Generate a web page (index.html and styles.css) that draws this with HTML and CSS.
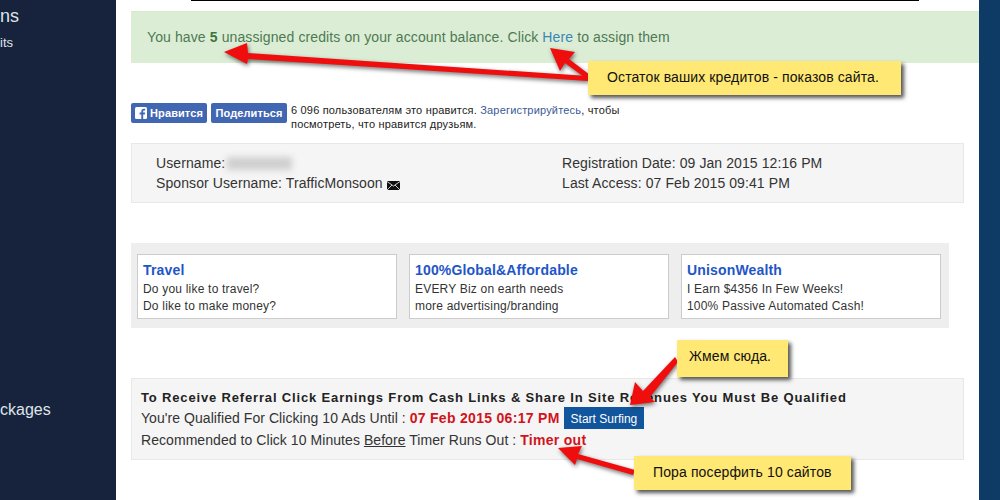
FILE: index.html
```html
<!DOCTYPE html>
<html lang="en">

<head>
    <meta charset="UTF-8">
    <meta name="viewport" content="width=device-width, initial-scale=1.0">
    <title>Member Area</title>
    <link rel="stylesheet" href="styles.css">
</head>

<body>
    <div class="page">
        <div class="sidebar">
            <div class="menu-main">ns</div>
            <div class="menu-sub">its</div>
            <div class="menu-packages">ckages</div>
        </div>

        <div class="content">
            <div class="top-line"></div>

            <div class="alert">You have <b>5</b> unassigned credits on your account balance. Click <a href="#">Here</a> to assign them</div>

            <div class="social">
                <div class="fb-btn">
                    <svg class="fb-icon" viewBox="0 0 12 12">
                        <rect width="12" height="12" rx="1.5" fill="#fff" />
                        <path d="M8.2 12V7.5h1.6l.3-1.9H8.2V4.5c0-.6.2-.9 1-.9h1V1.9C9.9 1.9 9.400 1.800 8.800 1.800 7.300 1.800 6.300 2.700 6.300 4.300v1.300H4.600v1.900h1.700V12z" fill="#4267b2" />
                    </svg>
                    Нравится
                </div>
                <div class="fb-btn">Поделиться</div>
                <div class="fb-text">
                    <div>6 096 пользователям это нравится. <a href="#">Зарегистрируйтесь</a>, чтобы</div>
                    <div>посмотреть, что нравится друзьям.</div>
                </div>
            </div>

            <div class="info-box">
                <div class="info-col">
                    <div>Username: <span class="blurred"></span></div>
                    <div>Sponsor Username: TrafficMonsoon
                        <svg class="mail" viewBox="0 0 13 9">
                            <rect width="13" height="9" fill="#111" />
                            <path d="M0 .5 6.500 5 13 .5M0 9l5-5M13 9 8 4" fill="none" stroke="#fff" stroke-width=".8" />
                        </svg>
                    </div>
                </div>
                <div class="info-col">
                    <div>Registration Date: 09 Jan 2015 12:16 PM</div>
                    <div>Last Access: 07 Feb 2015 09:41 PM</div>
                </div>
            </div>

            <div class="ads">
                <div class="ad">
                    <a href="#">Travel</a>
                    <div>Do you like to travel?</div>
                    <div>Do like to make money?</div>
                </div>
                <div class="ad">
                    <a href="#">100%Global&amp;Affordable</a>
                    <div>EVERY Biz on earth needs</div>
                    <div>more advertising/branding</div>
                </div>
                <div class="ad">
                    <a href="#">UnisonWealth</a>
                    <div>I Earn $4356 In Few Weeks!</div>
                    <div>100% Passive Automated Cash!</div>
                </div>
            </div>

            <div class="qualify">
                <h4>To Receive Referral Click Earnings From Cash Links &amp; Share In Site Revenues You Must Be Qualified</h4>
                <div class="qualify-row">You're Qualified For Clicking 10 Ads Until : <b class="red">07 Feb 2015 06:17 PM</b> <a class="surf" href="#">Start Surfing</a></div>
                <div class="qualify-row">Recommended to Click 10 Minutes <u>Before</u> Timer Runs Out : <b class="red">Timer out</b></div>
            </div>
        </div>

        <div class="right-bar"></div>

        <!-- annotations drawn over the screenshot -->
        <svg class="arrows" viewBox="0 0 1000 500">
            <path d="M224 52 247 43 248 53 588 76 588 81 248 59 247 64Z" />
            <path d="M550 48 575 52 569 59 590 75 588 80 565 63 560 71Z" />
            <path d="M630 405 635 382 643 391 675 357 678 362 650 397 655 402Z" />
            <path d="M558 448 582 446 578 454 635 470 633 475 577 459 575 465Z" />
        </svg>
        <div class="note note-credits">Остаток ваших кредитов - показов сайта.</div>
        <div class="note note-click">Жмем сюда.</div>
        <div class="note note-surf">Пора посерфить 10 сайтов</div>
    </div>
</body>

</html>
```

FILE: styles.css
```css
body {
    margin: 0;
    font-family: "Liberation Sans", Arial, sans-serif;
    background: #fff;
}

.page {
    position: relative;
    display: flex;
    width: 1000px;
    height: 500px;
    overflow: hidden;
}

.sidebar {
    width: 116px;
    flex-shrink: 0;
    background: #17233c;
    color: #dfe3ea;
    padding-top: 6px;
}

.menu-main {
    font-size: 18px;
    line-height: 21px;
}

.menu-sub {
    font-size: 13px;
    line-height: 15px;
    margin-top: 8px;
}

.menu-packages {
    font-size: 16px;
    line-height: 18px;
    margin-top: 351px;
}

.content {
    width: 863px;
    flex-shrink: 0;
    box-sizing: border-box;
    padding-left: 15px;
    color: #333;
    font-size: 14px;
}

.right-bar {
    flex: 1;
    background: #0e3a66;
}

.top-line {
    width: 728px;
    height: 1px;
    margin-left: 60px;
    background: #000;
}

.alert {
    height: 52px;
    margin-top: 10px;
    box-sizing: border-box;
    padding: 16px 16px 0;
    background: #dcedd6;
    border-top: 1px solid #d6e9c6;
    color: #4d7a52;
    font-size: 14px;
    line-height: 18px;
    letter-spacing: 0.11px;
}

.alert b {
    color: #3c763d;
}

.alert a {
    color: #3d87b5;
    text-decoration: none;
}

.social {
    display: flex;
    gap: 4px;
    margin-top: 40px;
    height: 30px;
}

.fb-btn {
    display: flex;
    align-items: center;
    justify-content: center;
    gap: 3px;
    width: 76px;
    height: 20px;
    border-radius: 2px;
    background: #4267b2;
    color: #fff;
    font-size: 11px;
    font-weight: bold;
    letter-spacing: 0.1px;
}

.fb-icon {
    width: 12px;
    height: 12px;
}

.fb-text {
    color: #222;
    font-size: 11px;
    line-height: 14px;
    letter-spacing: 0.18px;
}

.fb-text a {
    color: #3b5998;
    text-decoration: none;
}

.info-box {
    display: flex;
    width: 833px;
    height: 60px;
    margin-top: 10px;
    box-sizing: border-box;
    padding: 9px 0 0 24px;
    background: #f5f5f5;
    border: 1px solid #e8e8e8;
    font-size: 14px;
    line-height: 20px;
    letter-spacing: 0.09px;
}

.info-col {
    width: 406px;
    flex-shrink: 0;
}

.blurred {
    display: inline-block;
    width: 65px;
    height: 13px;
    margin-left: -2px;
    vertical-align: -2px;
    background: #cfcfcf;
    filter: blur(3px);
}

.mail {
    width: 13px;
    height: 9px;
    vertical-align: -2px;
}

.ads {
    display: flex;
    gap: 12px;
    width: 818px;
    height: 85px;
    margin-top: 40px;
    box-sizing: border-box;
    padding: 11px 6px 0;
    background: #eee;
}

.ad {
    width: 260px;
    height: 65px;
    box-sizing: border-box;
    padding: 5px 5px 0;
    background: #fff;
    border: 1px solid #ccc;
    color: #333;
    font-size: 12px;
    line-height: 17px;
    letter-spacing: 0.2px;
}

.ad a {
    display: block;
    color: #1e56c8;
    font-size: 14px;
    font-weight: bold;
    line-height: 21px;
    letter-spacing: 0.16px;
    text-decoration: none;
}

.qualify {
    width: 833px;
    height: 82px;
    margin-top: 50px;
    box-sizing: border-box;
    padding: 10px 9px 0;
    background: #f5f5f5;
    border: 1px solid #e8e8e8;
    font-size: 14px;
    letter-spacing: 0.06px;
}

.qualify h4 {
    margin: 0;
    color: #222;
    font-size: 13px;
    line-height: 18px;
    letter-spacing: 0.84px;
}

.qualify-row {
    line-height: 22px;
}

.red {
    color: #d0141c;
    letter-spacing: 0.3px;
}

.surf {
    display: inline-block;
    height: 22px;
    padding: 0 7px;
    vertical-align: top;
    background: #11559c;
    color: #fff;
    font-size: 12px;
    line-height: 24px;
    letter-spacing: 0;
    text-decoration: none;
}

.arrows {
    position: absolute;
    top: 0;
    left: 0;
    width: 1000px;
    height: 500px;
    fill: #f00d0d;
    filter: drop-shadow(1px 2px 2px rgba(0, 0, 0, 0.55));
}

.note {
    position: absolute;
    box-sizing: border-box;
    background: #ffe873;
    box-shadow: 3px 3px 4px #555;
    color: #111;
    font-size: 14px;
    letter-spacing: 0.12px;
}

.note-credits {
    left: 588px;
    top: 61px;
    width: 313px;
    height: 34px;
    padding: 8px 0 0 19px;
}

.note-click {
    left: 677px;
    top: 340px;
    width: 111px;
    height: 37px;
    padding: 8px 0 0 12px;
}

.note-surf {
    left: 634px;
    top: 456px;
    width: 217px;
    height: 34px;
    padding: 8px 0 0 19px;
}
```
